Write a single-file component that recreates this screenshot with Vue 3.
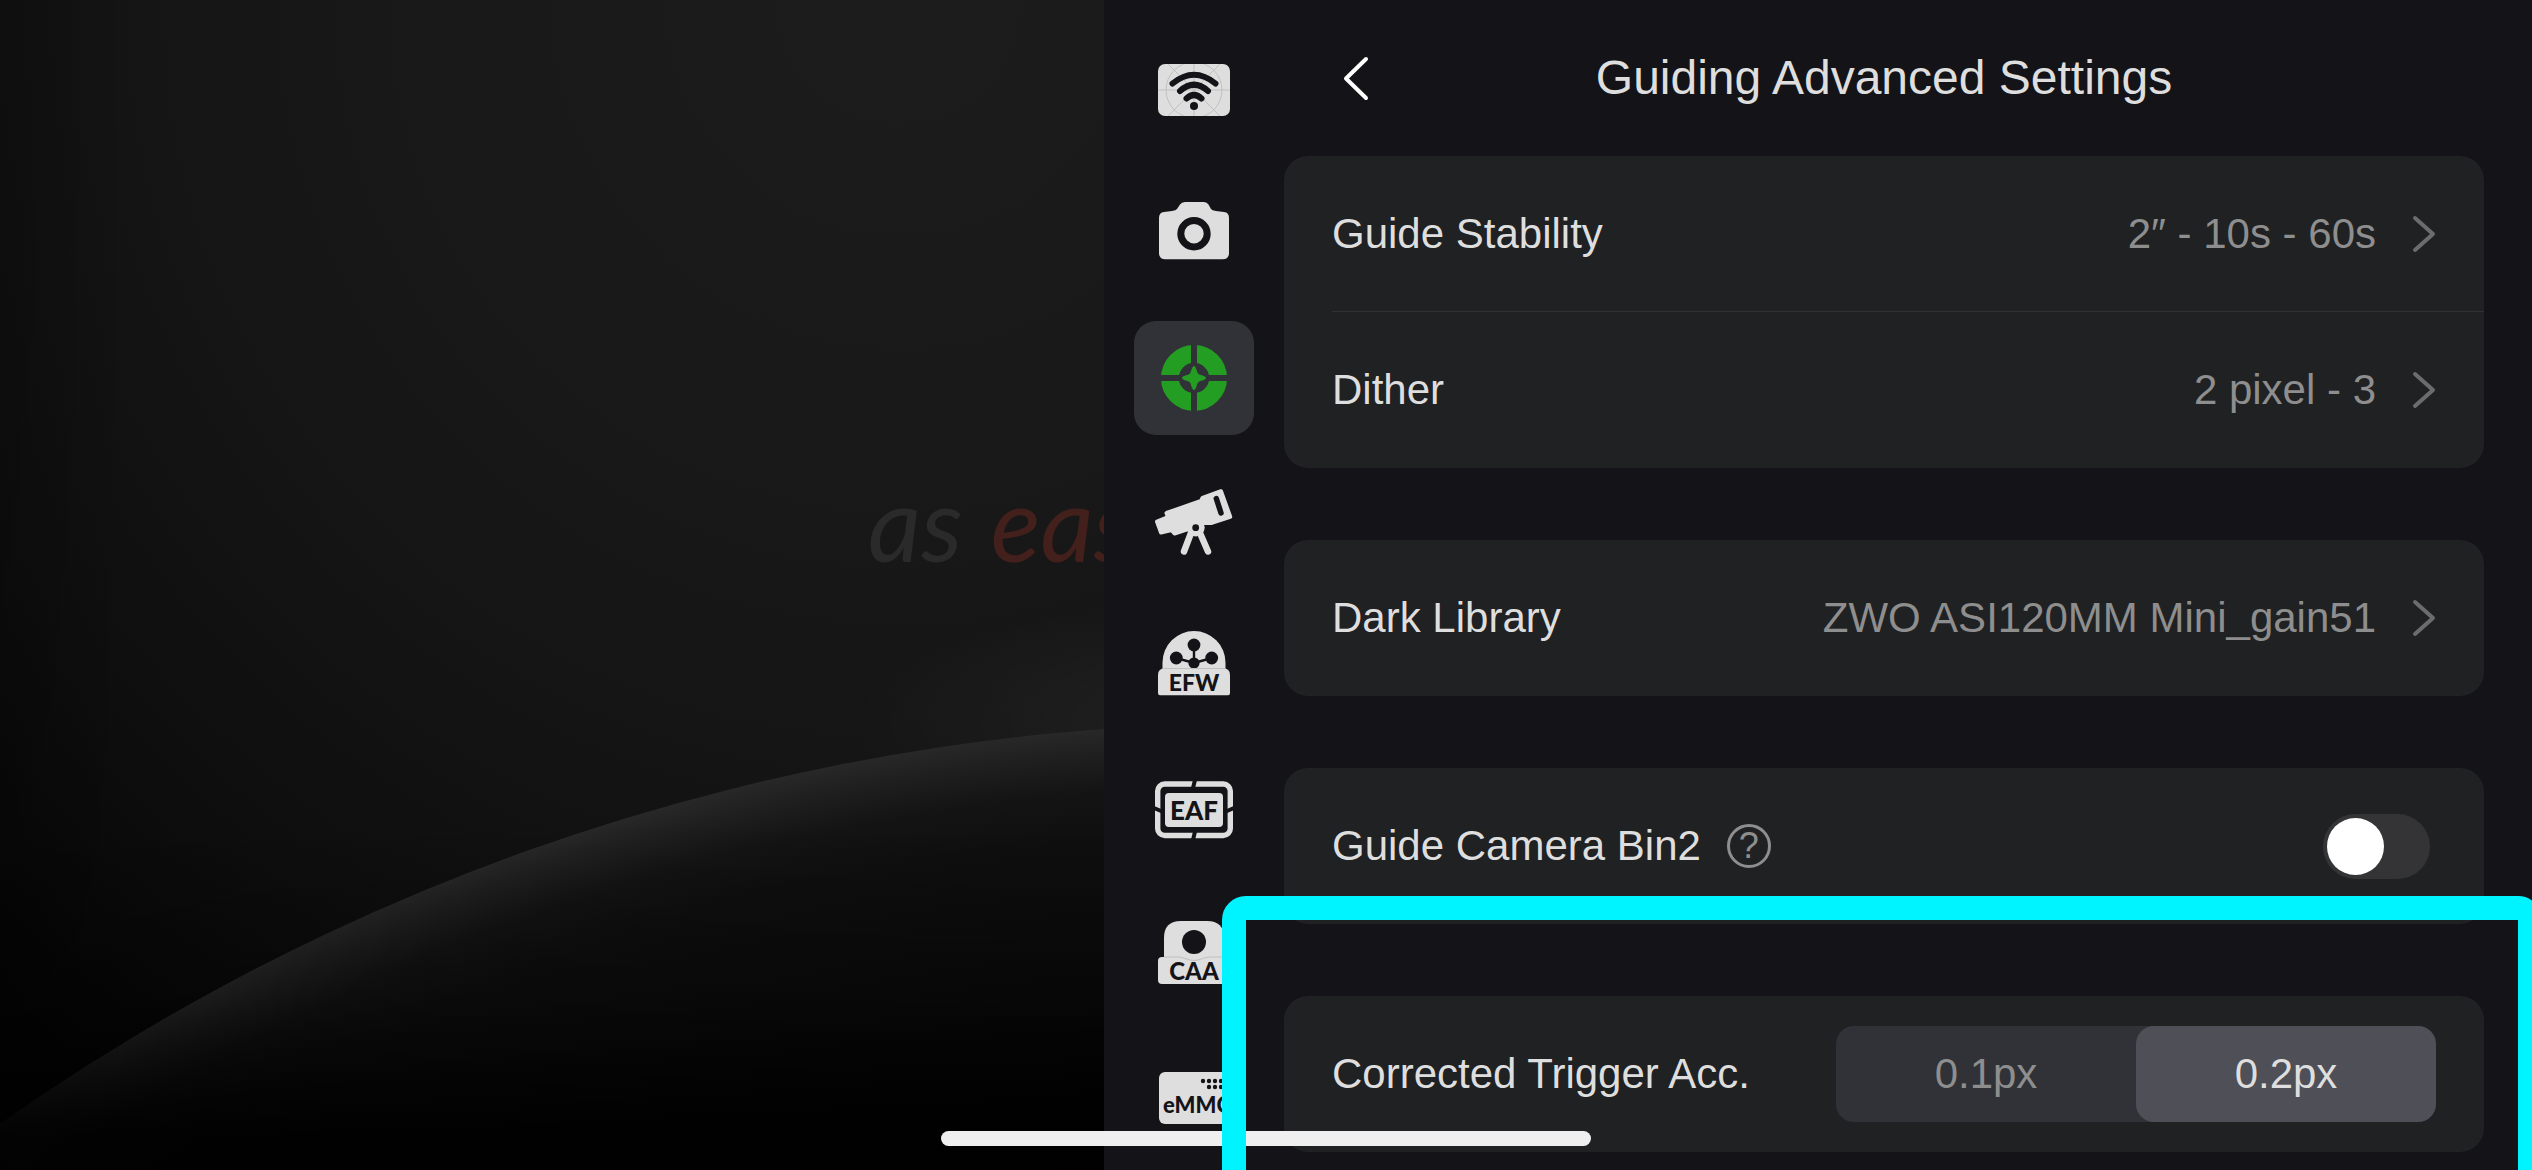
<script setup>
import { ref } from 'vue'

const devices = ['wifi', 'camera', 'guide', 'mount', 'efw', 'eaf', 'caa', 'emmc']
const deviceNames = {
  wifi: 'Station',
  camera: 'Camera',
  guide: 'Guiding',
  mount: 'Telescope',
  efw: 'EFW',
  eaf: 'EAF',
  caa: 'CAA',
  emmc: 'eMMC',
}
const active = ref('guide')

const groups = [
  [
    { label: 'Guide Stability', value: '2″ - 10s - 60s' },
    { label: 'Dither', value: '2 pixel - 3' },
  ],
  [{ label: 'Dark Library', value: 'ZWO ASI120MM Mini_gain51' }],
]

const bin2 = ref(false)
const accuracies = ['0.1px', '0.2px']
const accuracy = ref('0.2px')
</script>

<template>
  <div class="screen">
    <section class="scene">
      <svg class="sky" viewBox="0 0 1104 1170" preserveAspectRatio="xMaxYMax slice" aria-hidden="true">
        <defs>
          <radialGradient id="sky" gradientUnits="userSpaceOnUse" cx="900" cy="0" r="1500">
            <stop offset="0" stop-color="#1c1c1c" />
            <stop offset="0.3" stop-color="#191919" />
            <stop offset="0.5" stop-color="#151515" />
            <stop offset="0.7" stop-color="#0e0e0e" />
            <stop offset="0.9" stop-color="#040404" />
          </radialGradient>
          <radialGradient id="glow" gradientUnits="userSpaceOnUse" cx="1266" cy="723" r="420" gradientTransform="translate(0 506) scale(1 0.3)">
            <stop offset="0" stop-color="#fff" stop-opacity="0.06" />
            <stop offset="1" stop-color="#fff" stop-opacity="0" />
          </radialGradient>
          <radialGradient id="planet" gradientUnits="userSpaceOnUse" cx="1266" cy="2923" r="2200">
            <stop offset="0.8" stop-color="#020202" />
            <stop offset="0.88" stop-color="#0a0a0a" />
            <stop offset="0.95" stop-color="#0f0f0f" />
            <stop offset="0.972" stop-color="#141414" />
            <stop offset="0.99" stop-color="#202020" />
            <stop offset="1" stop-color="#282828" />
          </radialGradient>
          <linearGradient id="dusk" x1="0" y1="0" x2="0" y2="1">
            <stop offset="0.7" stop-color="#000" stop-opacity="0" />
            <stop offset="0.85" stop-color="#000" stop-opacity="0.3" />
            <stop offset="0.97" stop-color="#000" stop-opacity="0.9" />
          </linearGradient>
          <linearGradient id="edge" x1="0" y1="0" x2="1" y2="0">
            <stop offset="0" stop-color="#000" stop-opacity="0.2" />
            <stop offset="0.12" stop-color="#000" stop-opacity="0" />
          </linearGradient>
        </defs>
        <rect width="1104" height="1170" fill="url(#sky)" />
        <rect width="1104" height="1170" fill="url(#glow)" />
        <circle cx="1266" cy="2923" r="2200" fill="url(#planet)" />
        <rect width="1104" height="1170" fill="url(#dusk)" />
        <rect width="1104" height="1170" fill="url(#edge)" />
      </svg>
      <p class="tagline"><span>as</span><span class="accent">eas</span></p>
    </section>

    <div class="panel">
      <nav class="devices" aria-label="Devices">
        <button
          v-for="id in devices"
          :key="id"
          type="button"
          class="device"
          :class="{ active: active === id }"
          :aria-label="deviceNames[id]"
          @click="active = id"
        >
          <svg v-if="id === 'wifi'" viewBox="0 0 120 114">
            <clipPath id="plate"><rect x="24" y="31" width="72" height="52" rx="7" /></clipPath>
            <rect class="ink" x="24" y="31" width="72" height="52" rx="7" />
            <g class="guides" clip-path="url(#plate)">
              <path d="M24 57H96M60 31V83M34 31L86 83M86 31L34 83" />
              <circle cx="60" cy="57" r="28" />
            </g>
            <g class="cut-line" stroke-width="6">
              <path d="M38.500 50.500Q60 33 81.500 50.500" />
              <path d="M46 58Q60 45.500 74 58" />
              <path d="M52.500 65.500Q60 58.500 67.500 65.500" />
            </g>
            <circle class="cut" cx="60" cy="73" r="4" />
          </svg>

          <svg v-else-if="id === 'camera'" viewBox="0 0 120 114">
            <path
              class="ink"
              d="M25 41Q25 35.500 30 35L38 34Q42 33.600 43 32L46 27.500Q47.500 25 51 25H70Q73 25 74.500 27.500L77 32Q78 33.600 82 34L90 35Q95 35.500 95 41V76Q95 82.300 88.500 82.300H31.500Q25 82.300 25 76Z"
            />
            <circle class="cut-line" cx="60" cy="56.700" r="13.200" stroke-width="7" />
          </svg>

          <svg v-else-if="id === 'guide'" viewBox="0 0 120 114">
            <circle cx="60" cy="57" r="24" fill="none" stroke="#249d23" stroke-width="18" />
            <path d="M60 22V92M25 57H95" stroke="#303237" stroke-width="6" />
            <circle cx="60" cy="57" r="15" fill="#303237" />
            <path
              fill="#249d23"
              d="M60 45C62 45 63 51.500 64.200 52.800C65.500 54 72 55 72 57C72 59 65.500 60 64.200 61.200C63 62.500 62 69 60 69C58 69 57 62.500 55.800 61.200C54.500 60 48 59 48 57C48 55 54.500 54 55.800 52.800C57 51.500 58 45 60 45Z"
            />
          </svg>

          <svg v-else-if="id === 'mount'" viewBox="0 0 120 114">
            <path
              class="ink-line"
              stroke-width="4"
              d="M32.500 48L67 36L68.500 33L87 26.200L96.200 51.800L77 58L70 58L54 64L40.500 68.500L37.500 65L27 67.500L23 56.500L34 52Z"
            />
            <circle class="ink" cx="61.700" cy="62.500" r="9" />
            <path class="ink-line" stroke-width="6.500" d="M57 68L50 86.500M66 68L74 86.500" />
            <path class="cut-line" stroke-width="5.500" d="M82.300 33.500L87 48" />
            <circle class="cut" cx="61.700" cy="62.700" r="3.400" />
          </svg>

          <svg v-else-if="id === 'efw'" viewBox="0 0 120 114">
            <path class="ink" d="M28.500 60V53.500A31.500 31.500 0 0 1 91.500 53.500V60Z" />
            <g class="cut">
              <circle cx="60" cy="36" r="6.400" />
              <circle cx="42.300" cy="49" r="6.400" />
              <circle cx="77.700" cy="49" r="6.400" />
              <circle cx="60" cy="54" r="5.600" />
            </g>
            <path class="cut-line" stroke-width="2.400" d="M60 36V53M42 49L60 54L78 49" />
            <path class="ink" d="M24 66Q24 59.300 31 59.300H89Q96 59.300 96 66V84Q96 86.300 94 86.300H26Q24 86.300 24 84Z" />
            <path class="seam" d="M29 59.500H91" />
            <text x="60" y="82" text-anchor="middle" font-size="23">EFW</text>
          </svg>

          <svg v-else-if="id === 'eaf'" viewBox="0 0 120 114">
            <rect class="ink-line frame" x="23.700" y="31" width="72.600" height="51.500" rx="7" stroke-width="5.400" />
            <path class="cut-line" stroke-width="4" d="M61 27L59 35M61 78.500L59 87M20 55L27 58M93 58L100 55" />
            <rect class="ink" x="31" y="40" width="58" height="34" rx="4" />
            <text x="60" y="67" text-anchor="middle" font-size="26">EAF</text>
          </svg>

          <svg v-else-if="id === 'caa'" viewBox="0 0 120 114">
            <path class="ink" d="M30 61V41Q30 24 47 24H73Q90 24 90 41V61Z" />
            <rect class="ink" x="24" y="60" width="72" height="27" rx="4" />
            <path class="seam" d="M30 60H44C50 60 54 63.500 60 63.500S70 60 76 60H90" />
            <circle class="cut" cx="60" cy="45" r="12" />
            <text x="60" y="83" text-anchor="middle" font-size="24">CAA</text>
          </svg>

          <svg v-else viewBox="0 0 120 114">
            <rect class="ink" x="25" y="31" width="70" height="52" rx="6" />
            <g class="cut">
              <circle v-for="n in 4" :key="'a' + n" :cx="63 + n * 6" cy="40" r="2.200" />
              <circle v-for="n in 3" :key="'b' + n" :cx="69 + n * 6" cy="46" r="2.200" />
            </g>
            <text x="29" y="72" font-size="22">eMMC</text>
          </svg>
        </button>
      </nav>

      <main class="settings">
        <header class="bar">
          <button type="button" class="back" aria-label="Back">
            <svg viewBox="0 0 48 48"><path d="M34 5L14 24.500L34 44" /></svg>
          </button>
          <h1>Guiding Advanced Settings</h1>
        </header>

        <div class="groups">
          <section v-for="(rows, i) in groups" :key="i" class="card">
            <button v-for="row in rows" :key="row.label" type="button" class="row">
              <span class="label">{{ row.label }}</span>
              <span class="value">{{ row.value }}</span>
              <svg class="more" viewBox="0 0 24 48" aria-hidden="true"><path d="M3 8L21 24L3 40" /></svg>
            </button>
          </section>

          <section class="card">
            <div class="row">
              <label for="bin2">Guide Camera Bin2</label>
              <button type="button" class="help" aria-label="About Guide Camera Bin2">?</button>
              <input id="bin2" v-model="bin2" type="checkbox" class="switch" />
            </div>
          </section>

          <section class="card marked">
            <div class="row">
              <span id="accuracy" class="label">Corrected Trigger Acc.</span>
              <div class="segments" role="radiogroup" aria-labelledby="accuracy">
                <label v-for="a in accuracies" :key="a" class="segment" :class="{ on: accuracy === a }">
                  <input v-model="accuracy" type="radio" name="accuracy" :value="a" />
                  {{ a }}
                </label>
              </div>
            </div>
            <div class="marker"></div>
          </section>
        </div>
      </main>
    </div>

    <div class="home"></div>
  </div>
</template>

<style>
body {
  margin: 0;
  background: #141418;
}
</style>

<style scoped>
.screen {
  position: relative;
  display: grid;
  grid-template-columns: minmax(0, 92fr) minmax(0, 119fr);
  min-height: 100vh;
  overflow: hidden;
  background: #141418;
  color: #dedede;
  font: 42px/48px "Liberation Sans", Arial, sans-serif;
}

button,
input {
  margin: 0;
  padding: 0;
  border: 0;
  background: none;
  color: inherit;
  font: inherit;
}

.scene {
  position: relative;
  overflow: hidden;
  background: #000;
}

.sky {
  position: absolute;
  inset: 0;
  width: 100%;
  height: 100%;
}

.tagline {
  position: relative;
  display: flex;
  gap: 28px;
  width: 236px;
  margin: 460px 0 0 auto;
  color: #2a2a2a;
  font: italic 104px/124px Lato, sans-serif;
  white-space: nowrap;
}

.accent {
  color: #43201c;
}

.panel {
  display: flex;
}

.devices {
  display: flex;
  flex: none;
  flex-direction: column;
  align-items: center;
  gap: 30px;
  width: 180px;
  padding-top: 33px;
}

.device {
  width: 120px;
  height: 114px;
  border-radius: 22px;
}

.device.active {
  background: #303237;
}

.device svg {
  display: block;
  width: 120px;
  height: 114px;
}

.device text {
  fill: #141418;
  font-family: Lato, sans-serif;
  font-weight: 900;
}

.ink {
  fill: #dedede;
}

.ink-line {
  fill: #dedede;
  stroke: #dedede;
  stroke-linecap: round;
  stroke-linejoin: round;
}

.frame {
  fill: none;
}

.cut {
  fill: #141418;
}

.cut-line {
  fill: none;
  stroke: #141418;
  stroke-linecap: round;
}

.guides {
  fill: none;
  stroke: #c0c0c0;
  stroke-width: 1;
}

.seam {
  fill: none;
  stroke: #c0c0c0;
  stroke-width: 1;
}

.settings {
  flex: 1;
  min-width: 0;
  padding: 0 48px 18px 0;
}

.bar {
  display: grid;
  grid-template-columns: 1fr auto 1fr;
  align-items: center;
  height: 156px;
}

.back {
  width: 48px;
  height: 48px;
  margin-left: 48px;
}

.back svg {
  display: block;
  fill: none;
  stroke: #fff;
  stroke-width: 4;
  stroke-linecap: round;
  stroke-linejoin: round;
}

h1 {
  margin: 0;
  font-size: 48px;
  font-weight: 400;
  line-height: 56px;
}

.groups {
  display: flex;
  flex-direction: column;
  gap: 72px;
}

.card {
  display: flex;
  flex-direction: column;
  padding-left: 48px;
  border-radius: 24px;
  background: #202123;
}

.row {
  display: flex;
  align-items: center;
  box-sizing: border-box;
  height: 156px;
  padding-right: 48px;
  text-align: left;
  white-space: nowrap;
}

.row:has(+ .row) {
  border-bottom: 1px solid #313234;
}

.label {
  flex: 1;
}

.value {
  color: #8e8e8e;
}

.more {
  width: 24px;
  height: 48px;
  margin-left: 36px;
  fill: none;
  stroke: #6c6c6e;
  stroke-width: 4;
  stroke-linecap: round;
  stroke-linejoin: round;
}

.help {
  box-sizing: border-box;
  width: 44px;
  height: 44px;
  margin-left: 26px;
  border: 3px solid #8e8e8e;
  border-radius: 50%;
  color: #8e8e8e;
  font-size: 36px;
  line-height: 38px;
  text-align: center;
}

.switch {
  appearance: none;
  box-sizing: border-box;
  width: 107px;
  height: 65px;
  margin: 0 6px 0 auto;
  padding: 4px;
  border-radius: 33px;
  background: #343437;
}

.switch::before {
  content: "";
  display: block;
  width: 57px;
  height: 57px;
  border-radius: 50%;
  background: #fff;
}

.switch:checked {
  background: #249d23;
}

.switch:checked::before {
  margin-left: auto;
}

.segments {
  display: flex;
  width: 600px;
  height: 96px;
  border-radius: 18px;
  background: #303237;
}

.segment {
  display: flex;
  flex: 1;
  align-items: center;
  justify-content: center;
  border-radius: 18px;
  color: #8e8e8e;
}

.segment.on {
  background: #4f4f57;
  color: #dedede;
}

.segment input {
  position: absolute;
  opacity: 0;
}

.marked {
  position: relative;
}

/* Callout frame that runs past the right and bottom edges of the screen */
.marker {
  position: absolute;
  z-index: 2;
  inset: -100px -58px -70px -62px;
  border: 24px solid #00f4ff;
  border-radius: 24px;
  pointer-events: none;
}

.home {
  position: absolute;
  z-index: 1;
  bottom: 24px;
  left: 50%;
  width: 650px;
  height: 15px;
  margin-left: -325px;
  border-radius: 8px;
  background: #efefef;
}
</style>
